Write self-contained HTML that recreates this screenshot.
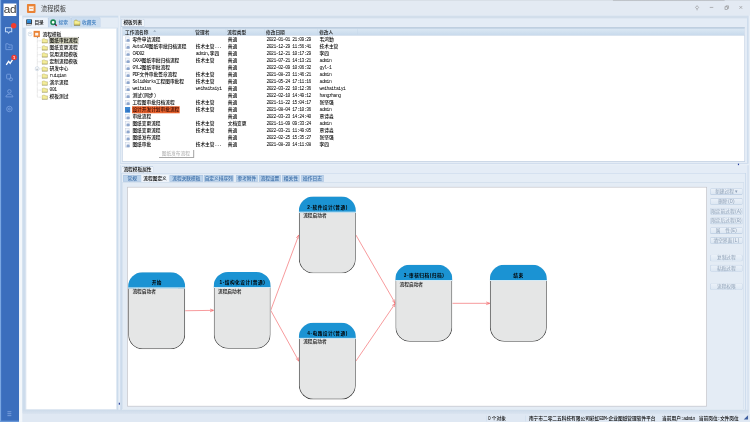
<!DOCTYPE html><html lang="zh-CN"><head><meta charset="utf-8"><title>流程模板</title><style>
html,body{margin:0;padding:0;width:750px;height:422px;overflow:hidden;background:#e8eff7}
#root{filter:contrast(1);position:absolute;left:0;top:0;width:1920px;height:1080px;transform:scale(0.390625);transform-origin:0 0;overflow:hidden;background:#e8eff7;font-family:"Liberation Sans","Noto Sans CJK SC",sans-serif;font-size:12px;color:#000;font-weight:500}
#root div,#root span,#root i{position:absolute;box-sizing:border-box;white-space:nowrap}
.l{position:static!important;font-family:"Liberation Mono","Noto Sans CJK SC",monospace;font-size:12px;letter-spacing:-1.2px;color:inherit}
.side{left:0;top:0;width:49px;height:1080px;background:#3b6ebd}
.sidel{left:0;top:0;width:3px;height:1080px;background:linear-gradient(90deg,#8fb9ec,#5f8fd6)}
.sideb{left:0;bottom:0;width:49px;height:3px;background:#6c9adb}
.ad{left:9px;top:9px;width:33px;height:32px;background:#fff;color:#3a3a3a;font-size:30px;line-height:29px;text-align:center;letter-spacing:-1px;font-family:"Liberation Sans",sans-serif}
.tbar{left:49px;top:0;width:1871px;height:40px;background:#e3eaf3;box-shadow:inset 0 2px 0 #d5dbe3}
.topshadow{left:1520px;top:0;width:286px;height:3px;background:linear-gradient(#a8abaf,#dde4ec)}
.ticon{left:20px;top:10px;width:22px;height:23px;background:#e98235;border-radius:2px}
.ti1{left:5px;top:6px;width:12px;height:12px;background:#fdf3ea;border-top:2px solid #f6c9a4}
.ti2{left:7px;top:11px;width:8px;height:2px;background:#ee9a5c}
.ttitle{left:56px;top:12px;font-size:16px;line-height:24px;color:#3c3c3c;font-weight:400}
.lp{left:57px;top:40px;width:246px;height:1018px;background:#cddcec;box-shadow:inset 0 0 0 1px #c0d3e8}
.ltabs{left:1px;top:5px;width:244px;height:26px;background:#e4ecf5}
.ltab{top:0;height:25px;background:#cbddf0;border-radius:3px 3px 0 0;box-shadow:inset 0 0 0 1px #b0c6e0}
.ltab.act{background:#edf3fb;box-shadow:inset 1px 1px 0 0 #c5d6ea}
.ltab .tx{left:32px;top:5px;font-size:12px;line-height:15px;color:#3f7fc0}
.ltab .ic{left:8px;top:3px;width:18px;height:19px}



.tree{left:9px;top:32px;width:232px;height:977px;background:#fff;box-shadow:inset 0 0 0 1px #b9cce3}
.trow{left:0;width:230px;height:18px}
.trow .tt{top:1px;height:16px;line-height:16px;font-size:12px;color:#000;padding:0 1px}
.trow .tt.sel{background:#d2d2ba;outline:1px dotted #666}
.exp{top:4px;width:10px;height:10px;border:1px solid #a3b6cf;font-size:9px;line-height:7px;text-align:center;color:#567;background:#fff;border-radius:3px;font-weight:normal}
.oic{top:1px;width:16px;height:16px;background:#e98235}
.oic:after{content:"";position:absolute;left:4px;top:5px;width:8px;height:7px;background:#fdf3ea}
.fold{top:3px;width:17px;height:13px}

.vline{width:0;border-left:1px dotted #999}
.hline{top:9px;width:9px;height:0;border-top:1px dotted #999}
.spdot{width:3px;height:5px;background:#2a3f9a}
.rp{left:308px;top:40px;width:1608px;height:379px;background:#e4ecf6;box-shadow:inset 0 0 0 1px #bdd0e6;border-right:2px solid #c6d6e9}
.rtab{left:2px;top:8px;width:60px;height:21px;background:#f0f5fb;border-radius:4px 4px 0 0;box-shadow:inset 0 0 0 1px #a3b9d4;font-size:12px;line-height:19px;text-align:center;color:#000}
.list{left:5px;top:29px;width:1594px;height:345px;background:#fff;box-shadow:inset 0 0 0 1px #9fb6d2;overflow:hidden}
.lhead{left:1px;top:0;width:1592px;height:22px;background:linear-gradient(#bfcfe0 0,#bfcfe0 2px,#e6eef7 2px,#e6eef7 3px,#c6d6e7 3px,#c6d6e7 5px,#dae7f3 5px,#c8daec 100%);border-bottom:1px solid #afc4dc}
.lhead span{top:6px;line-height:15px;color:#111}
.lhead i{top:2px;width:1px;height:17px;background:#c4d5e8}
.sort{width:0;height:0;border-left:4px solid transparent;border-right:4px solid transparent;border-bottom:4px solid #9ab;top:8px!important}
.lrow{left:1px;width:1595px;height:18px}
.lrow .c{top:1px;line-height:16px;height:16px;color:#000;padding:0 1px}
.lrow .csel{background:#e8642f;color:#3a0a00;top:0!important;height:18px!important;line-height:18px!important}
.dic{top:2px;width:11px;height:13px;background:#f3f6fb;border:1px solid #bfcadb}
.dic:after{content:"";position:absolute;left:3px;top:5px;width:8px;height:7px;background:#8ea6cc;border-radius:3px 3px 1px 1px}
.dic.dsel{background:#3f88d2;border-color:#3f88d2;width:13px;height:14px}
.dic.dsel:after{background:#2f74c4}
.tip{left:92px;top:313px;width:90px;height:20px;background:#fff;box-shadow:2px 2px 1px #888;font-size:12px;line-height:20px;text-align:center;color:#bbb}
.bp{left:308px;top:423px;width:1608px;height:634px;background:#e4ecf6;box-shadow:inset 1px 0 0 0 #b5c9e2;border-right:2px solid #c6d6e9}
.btab{left:3px;top:2px;width:82px;height:18px;background:#f0f5fb;border-radius:4px 4px 0 0;box-shadow:inset 0 0 0 1px #a3b9d4;font-size:12px;line-height:17px;text-align:center;color:#000}
.bframe{left:2px;top:19px;width:1600px;height:611px;background:#e5edf6;box-shadow:inset 0 0 0 2px #c5d6e9}
.stab{top:6px;height:17px;background:#bdd4ec;box-shadow:inset 0 0 0 1px #a5bedb;border-radius:2px 2px 0 0;font-size:12px;line-height:16px;text-align:center;color:#3d6fa8}
.stab.sact{background:#f0f5fb;color:#000;box-shadow:none}
.pane{left:3px;top:24px;width:1591px;height:582px;background:#e4ecf5;box-shadow:inset 0 0 0 1px #c6d6e8}
.canvas{left:14px;top:14px;width:1481px;height:559px;background:#fff;box-shadow:0 0 0 1.5px #bdbcc2;overflow:hidden}
.btn{left:1505px;width:83px;height:17px;border-radius:4px;background:linear-gradient(#ecf2f9,#dbe6f2);box-shadow:inset 0 0 0 1px #a9bfd9;font-size:12px;line-height:16px;text-align:center;color:#8d9fb5;font-weight:400}

.node{width:146px;height:197px;border-radius:37px;background:#e5e6e6;overflow:hidden}
.nbody{left:0;top:41px;width:146px;height:156px;border:2px solid #3a3a3a;border-top:none;border-radius:0 0 37px 37px;background:#e5e6e6}
.node .nh{left:0;top:0;width:146px;height:41px;background:#1b93d3;border-bottom:2px solid #fff;font-weight:bold;font-size:12px;line-height:14px;text-align:center;padding-top:20px;color:#000;letter-spacing:1.3px;padding-left:1px}
.node .nb{left:11px;top:42px;font-size:12px;line-height:14px;color:#111}
.bband{left:57px;top:1049px;width:1859px;height:11px;background:linear-gradient(#cddbea,#dae4f0)}
.sbar{left:49px;top:1060px;width:1871px;height:20px;background:#dfe8f3}
.sbar span{top:4px;line-height:15px;font-size:12px;color:#000;font-weight:500}
.sbar i{top:4px;width:1px;height:15px;background:#c4d5e8}

.grip{left:1855px;top:3px;width:0;height:0;border-left:11px solid transparent;border-bottom:11px solid #3f5f9f}
.gapl{left:49px;top:40px;width:8px;height:1040px;background:#f3f7fb;z-index:3}
.rtop{left:0;top:0;width:1606px;height:7px;background:#d2deeb}

</style></head><body><div id="root">
<div class="side"><div class="sidel"></div><div class="sideb"></div>
<div class="ad">ad</div>
<svg style="position:absolute;left:0;top:0" width="49" height="1080" viewBox="0 0 49 1080" fill="none" stroke="#789fe0" stroke-width="2.2">
<path d="M14 71h16v10h-5l-3 4-3-4h-5z" stroke="#bdd6f5" stroke-width="2.600"/>
<circle cx="35" cy="66" r="7" fill="#f03d30" stroke="none"/>
<path d="M15 112h6l2 3h8v12h-16z"/><path d="M21 121h6"/>
<path d="M16 166l6-9 4 5 6-9" stroke="#fff" stroke-width="3.4"/>
<circle cx="36" cy="147" r="7" fill="#ec3a32" stroke="none"/>
<rect x="17" y="190" width="10" height="12" rx="2"/><circle cx="28" cy="203" r="4"/>
<circle cx="24" cy="234" r="4.5"/><path d="M15 248c1-9 17-9 18 0z"/>
<circle cx="24" cy="279" r="7"/><circle cx="24" cy="279" r="2.5"/>
<path d="M19 1054h10M19 1059h10M19 1064h10" stroke="#88abe4" stroke-width="2"/>
</svg>
<span style="left:33.5px;top:141px;font-size:10px;line-height:12px;color:#fff;font-weight:bold">1</span>

</div>
<div class="tbar"><div class="topshadow"></div>
<div class="ticon"><div class="ti1"></div><div class="ti2"></div></div><div class="ttitle">流程模板</div>
<svg style="position:absolute;left:1700px;top:0" width="171" height="40" viewBox="0 0 171 40" fill="none" stroke="#8a8a8a" stroke-width="1.5">
<path d="M35.5 14.5l4 4.5-4 4.5-4-4.5z"/><path d="M35.5 23.5v3"/>
<path d="M68 19h9"/>
<rect x="107" y="17.5" width="6.5" height="6.5"/><path d="M109.5 17.5v-2.500h6.5v6.500h-2.500"/>
<path d="M144 15.5l7 7M151 15.500l-7 7"/>
</svg>

</div>
<div class="gapl"></div>
<div class="lp">
<div class="ltabs"><div class="ltab act" style="left:0px;width:64px"><svg class="ic" style="position:absolute;left:8px" viewBox="0 0 18 19"><rect x="1" y="1" width="15" height="14" rx="2" fill="#3b3f45"/><rect x="3.500" y="2" width="10" height="9" fill="#3aa6ec"/><rect x="4.500" y="5" width="8" height="6" fill="#2b7fd0"/><rect x="2" y="13.500" width="13" height="4.500" fill="#f6f6f6" stroke="#60646a"/></svg><span class="tx" style="color:#111;left:30px">目录</span></div><div class="ltab" style="left:65px;width:58px"><svg class="ic" style="position:absolute;left:5px" viewBox="0 0 18 19"><circle cx="8" cy="9" r="5.500" fill="#fff" stroke="#1d8a52" stroke-width="4"/><path d="M12 13l5 5" stroke="#2b3560" stroke-width="3.500"/><path d="M15.500 16.500l2 2" stroke="#c03030" stroke-width="3"/></svg><span class="tx" style="left:27px">搜索</span></div><div class="ltab" style="left:124px;width:75px"><svg class="ic" style="position:absolute;left:6px" viewBox="0 0 18 19"><path d="M1.500 16.500v-10l2.500-3h5l2 3h6v10z" fill="#efe67e" stroke="#8f8a4a" stroke-width="1.200"/><path d="M3 8.500h13" stroke="#fbf7c0" stroke-width="2"/><path d="M1.500 16.500h15.500" stroke="#6f6a3c" stroke-width="1.600"/></svg><span class="tx" style="left:28px">收藏夹</span></div></div>
<div class="tree">
<div class="trow" style="top:6px"><span class="exp" style="left:6px">−</span><span class="oic" style="left:20px"></span><span class="tt" style="left:42px">流程模板</span></div>
<div class="vline" style="left:29px;top:22px;height:154px"></div>
<div class="trow" style="top:23.0px">
<span class="hline" style="left:30px"></span>
<svg class="fold" style="position:absolute;left:40px" viewBox="0 0 17 13"><path d="M1.500 12.500v-9l2-2.500h5l2 2.500h5v9z" fill="#f3ec9a" stroke="#9b9356" stroke-width="1"/><path d="M1.500 12.500h14" stroke="#6f6a3c" stroke-width="1.600"/></svg><span class="tt sel" style="left:60px">图纸审批流程</span></div>
<div class="trow" style="top:41.0px">
<span class="hline" style="left:30px"></span>
<svg class="fold" style="position:absolute;left:40px" viewBox="0 0 17 13"><path d="M1.500 12.500v-9l2-2.500h5l2 2.500h5v9z" fill="#f3ec9a" stroke="#9b9356" stroke-width="1"/><path d="M1.500 12.500h14" stroke="#6f6a3c" stroke-width="1.600"/></svg><span class="tt" style="left:60px">图纸变更流程</span></div>
<div class="trow" style="top:59.0px">
<span class="hline" style="left:30px"></span>
<svg class="fold" style="position:absolute;left:40px" viewBox="0 0 17 13"><path d="M1.500 12.500v-9l2-2.500h5l2 2.500h5v9z" fill="#f3ec9a" stroke="#9b9356" stroke-width="1"/><path d="M1.500 12.500h14" stroke="#6f6a3c" stroke-width="1.600"/></svg><span class="tt" style="left:60px">常用流程模板</span></div>
<div class="trow" style="top:77.0px">
<span class="hline" style="left:30px"></span>
<svg class="fold" style="position:absolute;left:40px" viewBox="0 0 17 13"><path d="M1.500 12.500v-9l2-2.500h5l2 2.500h5v9z" fill="#f3ec9a" stroke="#9b9356" stroke-width="1"/><path d="M1.500 12.500h14" stroke="#6f6a3c" stroke-width="1.600"/></svg><span class="tt" style="left:60px">定制流程模板</span></div>
<div class="trow" style="top:95.0px">
<span class="exp" style="left:24px">+</span>
<span class="hline" style="left:35px"></span>
<svg class="fold" style="position:absolute;left:40px" viewBox="0 0 17 13"><path d="M1.500 12.500v-9l2-2.500h5l2 2.500h5v9z" fill="#f3ec9a" stroke="#9b9356" stroke-width="1"/><path d="M1.500 12.500h14" stroke="#6f6a3c" stroke-width="1.600"/></svg><span class="tt" style="left:60px">研发中心</span></div>
<div class="trow" style="top:113.0px">
<span class="hline" style="left:30px"></span>
<svg class="fold" style="position:absolute;left:40px" viewBox="0 0 17 13"><path d="M1.500 12.500v-9l2-2.500h5l2 2.500h5v9z" fill="#f3ec9a" stroke="#9b9356" stroke-width="1"/><path d="M1.500 12.500h14" stroke="#6f6a3c" stroke-width="1.600"/></svg><span class="tt" style="left:60px"><span class="l">ruiqian</span></span></div>
<div class="trow" style="top:131.0px">
<span class="hline" style="left:30px"></span>
<svg class="fold" style="position:absolute;left:40px" viewBox="0 0 17 13"><path d="M1.500 12.500v-9l2-2.500h5l2 2.500h5v9z" fill="#f3ec9a" stroke="#9b9356" stroke-width="1"/><path d="M1.500 12.500h14" stroke="#6f6a3c" stroke-width="1.600"/></svg><span class="tt" style="left:60px">演示流程</span></div>
<div class="trow" style="top:149.0px">
<span class="hline" style="left:30px"></span>
<svg class="fold" style="position:absolute;left:40px" viewBox="0 0 17 13"><path d="M1.500 12.500v-9l2-2.500h5l2 2.500h5v9z" fill="#f3ec9a" stroke="#9b9356" stroke-width="1"/><path d="M1.500 12.500h14" stroke="#6f6a3c" stroke-width="1.600"/></svg><span class="tt" style="left:60px"><span class="l">001</span></span></div>
<div class="trow" style="top:167.0px">
<span class="hline" style="left:30px"></span>
<svg class="fold" style="position:absolute;left:40px" viewBox="0 0 17 13"><path d="M1.500 12.500v-9l2-2.500h5l2 2.500h5v9z" fill="#f3ec9a" stroke="#9b9356" stroke-width="1"/><path d="M1.500 12.500h14" stroke="#6f6a3c" stroke-width="1.600"/></svg><span class="tt" style="left:60px">模板测试</span></div>
</div></div>
<div class="spdot" style="left:304px;top:1031px"></div>
<div class="rp"><div class="rtop"></div>
<div class="rtab">模板列表</div>
<div class="list"><div class="lhead">
<span style="left:6px">工作流名称</span>
<span style="left:186px">管理者</span>
<span style="left:268px">流程类型</span>
<span style="left:367px">修改日期</span>
<span style="left:503px">修改人</span>
<span class="sort" style="left:78px"></span>
<i style="left:182px"></i>
<i style="left:264px"></i>
<i style="left:363px"></i>
<i style="left:499px"></i>
<i style="left:600px"></i>
</div>
<div class="lrow" style="top:23px">
<span class="dic" style="left:6px"></span>
<span class="c" style="left:24px">零件申请流程</span>
<span class="c" style="left:186px"></span>
<span class="c" style="left:268px">普通</span>
<span class="c" style="left:367px"><span class="l">2022-01-01 21:09:29</span></span>
<span class="c" style="left:503px">韦鸿勤</span>
</div>
<div class="lrow" style="top:41px">
<span class="dic" style="left:6px"></span>
<span class="c" style="left:24px"><span class="l">AutoCAD</span>图纸审批归档流程</span>
<span class="c" style="left:186px">技术主管<span class="l">...</span></span>
<span class="c" style="left:268px">普通</span>
<span class="c" style="left:367px"><span class="l">2021-12-29 11:56:41</span></span>
<span class="c" style="left:503px">技术主管</span>
</div>
<div class="lrow" style="top:59px">
<span class="dic" style="left:6px"></span>
<span class="c" style="left:24px"><span class="l">CAD02</span></span>
<span class="c" style="left:186px"><span class="l">admin,</span>李四</span>
<span class="c" style="left:268px">普通</span>
<span class="c" style="left:367px"><span class="l">2021-12-21 10:17:29</span></span>
<span class="c" style="left:503px">李四</span>
</div>
<div class="lrow" style="top:77px">
<span class="dic" style="left:6px"></span>
<span class="c" style="left:24px"><span class="l">CAXA</span>图纸审批归档流程</span>
<span class="c" style="left:186px">技术主管</span>
<span class="c" style="left:268px">普通</span>
<span class="c" style="left:367px"><span class="l">2021-07-21 14:13:21</span></span>
<span class="c" style="left:503px"><span class="l">admin</span></span>
</div>
<div class="lrow" style="top:95px">
<span class="dic" style="left:6px"></span>
<span class="c" style="left:24px"><span class="l">GYL2</span>图纸审批流程</span>
<span class="c" style="left:186px"></span>
<span class="c" style="left:268px">普通</span>
<span class="c" style="left:367px"><span class="l">2022-02-09 10:06:32</span></span>
<span class="c" style="left:503px"><span class="l">gyl-1</span></span>
</div>
<div class="lrow" style="top:113px">
<span class="dic" style="left:6px"></span>
<span class="c" style="left:24px"><span class="l">PDF</span>文件审批签章流程</span>
<span class="c" style="left:186px">技术主管</span>
<span class="c" style="left:268px">普通</span>
<span class="c" style="left:367px"><span class="l">2021-08-23 11:46:21</span></span>
<span class="c" style="left:503px"><span class="l">admin</span></span>
</div>
<div class="lrow" style="top:131px">
<span class="dic" style="left:6px"></span>
<span class="c" style="left:24px"><span class="l">SolidWorks</span>工程图审批程</span>
<span class="c" style="left:186px">技术主管</span>
<span class="c" style="left:268px">普通</span>
<span class="c" style="left:367px"><span class="l">2021-05-24 17:11:16</span></span>
<span class="c" style="left:503px"><span class="l">admin</span></span>
</div>
<div class="lrow" style="top:149px">
<span class="dic" style="left:6px"></span>
<span class="c" style="left:24px"><span class="l">weitaiss</span></span>
<span class="c" style="left:186px"><span class="l">weihaitaiyi</span></span>
<span class="c" style="left:268px">普通</span>
<span class="c" style="left:367px"><span class="l">2022-03-22 10:12:36</span></span>
<span class="c" style="left:503px"><span class="l">weihaitaiyi</span></span>
</div>
<div class="lrow" style="top:167px">
<span class="dic" style="left:6px"></span>
<span class="c" style="left:24px">测试<span class="l">(</span>同步<span class="l">)</span></span>
<span class="c" style="left:186px"></span>
<span class="c" style="left:268px">普通</span>
<span class="c" style="left:367px"><span class="l">2022-02-10 14:49:12</span></span>
<span class="c" style="left:503px"><span class="l">hangzhang</span></span>
</div>
<div class="lrow" style="top:185px">
<span class="dic" style="left:6px"></span>
<span class="c" style="left:24px">工程图审批归档流程</span>
<span class="c" style="left:186px">技术主管</span>
<span class="c" style="left:268px">普通</span>
<span class="c" style="left:367px"><span class="l">2021-11-22 15:04:17</span></span>
<span class="c" style="left:503px">张坚强</span>
</div>
<div class="lrow" style="top:203px">
<span class="dic dsel" style="left:6px"></span>
<span class="c csel" style="left:24px">设计开发计划审批流程</span>
<span class="c" style="left:186px">技术主管</span>
<span class="c" style="left:268px">普通</span>
<span class="c" style="left:367px"><span class="l">2021-08-04 17:10:36</span></span>
<span class="c" style="left:503px"><span class="l">admin</span></span>
</div>
<div class="lrow" style="top:221px">
<span class="dic" style="left:6px"></span>
<span class="c" style="left:24px">审批流程</span>
<span class="c" style="left:186px"></span>
<span class="c" style="left:268px">普通</span>
<span class="c" style="left:367px"><span class="l">2022-03-23 14:24:40</span></span>
<span class="c" style="left:503px">覃诗淼</span>
</div>
<div class="lrow" style="top:239px">
<span class="dic" style="left:6px"></span>
<span class="c" style="left:24px">图纸变更流程</span>
<span class="c" style="left:186px">技术主管</span>
<span class="c" style="left:268px">文档变更</span>
<span class="c" style="left:367px"><span class="l">2021-11-09 09:33:24</span></span>
<span class="c" style="left:503px"><span class="l">admin</span></span>
</div>
<div class="lrow" style="top:257px">
<span class="dic" style="left:6px"></span>
<span class="c" style="left:24px">图纸变更流程</span>
<span class="c" style="left:186px">技术主管</span>
<span class="c" style="left:268px">普通</span>
<span class="c" style="left:367px"><span class="l">2022-03-21 11:49:05</span></span>
<span class="c" style="left:503px">覃诗淼</span>
</div>
<div class="lrow" style="top:275px">
<span class="dic" style="left:6px"></span>
<span class="c" style="left:24px">图纸发布流程</span>
<span class="c" style="left:186px"></span>
<span class="c" style="left:268px">普通</span>
<span class="c" style="left:367px"><span class="l">2022-02-25 15:35:27</span></span>
<span class="c" style="left:503px">张坚强</span>
</div>
<div class="lrow" style="top:293px">
<span class="dic" style="left:6px"></span>
<span class="c" style="left:24px">图纸审批</span>
<span class="c" style="left:186px">技术主管<span class="l">...</span></span>
<span class="c" style="left:268px">普通</span>
<span class="c" style="left:367px"><span class="l">2021-08-20 14:11:08</span></span>
<span class="c" style="left:503px">李四</span>
</div>
<div class="tip">图纸发布流程</div>
</div></div>
<div class="spdot" style="left:1889px;top:419px"></div>
<div class="bp">
<div class="btab">流程模板属性</div>
<div class="bframe">
<div class="stab" style="left:5px;width:47px">常规</div>
<div class="stab sact" style="left:52px;width:70px">流程图定义</div>
<div class="stab" style="left:124px;width:86px">流程关联模板</div>
<div class="stab" style="left:212px;width:76px">自定义排序列</div>
<div class="stab" style="left:294px;width:56px">参考附件</div>
<div class="stab" style="left:353px;width:56px">流程设置</div>
<div class="stab" style="left:412px;width:45px">相关性</div>
<div class="stab" style="left:461px;width:58px">操作日志</div>
<div class="pane">
<div class="canvas">
<svg style="position:absolute;left:0;top:0" width="1481" height="559" viewBox="0 0 1481 559" fill="none" stroke="#f0474c" stroke-width="1.4"><path d="M147.0 315.5L220.0 314.5M210.7 318.2L220.0 314.5L210.6 311.1"/><path d="M366.0 314.5L438.0 121.5M438.0 131.5L438.0 121.5L431.4 129.0"/><path d="M366.0 314.5L438.0 444.5M430.4 438.0L438.0 444.5L436.5 434.6"/><path d="M584.0 121.5L685.0 296.5M677.3 290.2L685.0 296.5L683.4 286.6"/><path d="M584.0 444.5L685.0 296.5M682.6 306.2L685.0 296.5L676.8 302.2"/><path d="M831.0 296.5L927.0 296.5M917.6 300.0L927.0 296.5L917.6 293.0"/></svg>
<div class="node" style="left:1px;top:217px"><div class="nbody"></div><div class="nh">开始</div><div class="nb">流程启动者</div></div>
<div class="node" style="left:220px;top:216px"><div class="nbody"></div><div class="nh">1-结构化设计(普通)</div><div class="nb">流程启动者</div></div>
<div class="node" style="left:438px;top:23px"><div class="nbody"></div><div class="nh">2-软件设计(普通)</div><div class="nb">流程启动者</div></div>
<div class="node" style="left:438px;top:346px"><div class="nbody"></div><div class="nh">4-电路设计(普通)</div><div class="nb">流程启动者</div></div>
<div class="node" style="left:685px;top:198px"><div class="nbody"></div><div class="nh">3-审核归档(归档)</div><div class="nb">流程启动者</div></div>
<div class="node" style="left:927px;top:198px"><div class="nbody"></div><div class="nh">结束</div></div>
</div>
<div class="btn" style="top:15.5px">新建过程 ▾</div>
<div class="btn" style="top:40.5px">删除<span class="l">(D)</span></div>
<div class="btn" style="top:65.5px">限定前过程<span class="l">(A)</span></div>
<div class="btn" style="top:90.5px">限定后过程<span class="l">(B)</span></div>
<div class="btn" style="top:115.5px">属　性<span class="l">(E)</span></div>
<div class="btn" style="top:141.0px">清空界面<span class="l">(L)</span></div>
<div class="btn" style="top:186.0px">复制过程</div>
<div class="btn" style="top:212.0px">粘贴过程</div>
<div class="btn" style="top:259.0px">流程权限</div>
</div></div></div>
<div class="bband"></div><div class="sbar"><span style="left:1200px">0 个对象</span><i style="left:1196px"></i><i style="left:1296px"></i><span style="left:1305px">南宁市二零二五科技有限公司彩虹<span class="l">EDM-</span>企业图纸管理软件平台</span><span style="left:1646px">当前用户<span class="l">:admin</span></span><span style="left:1740px">当前岗位<span class="l">:</span>文件岗位</span><div class="grip"></div></div>
</div></body></html>
